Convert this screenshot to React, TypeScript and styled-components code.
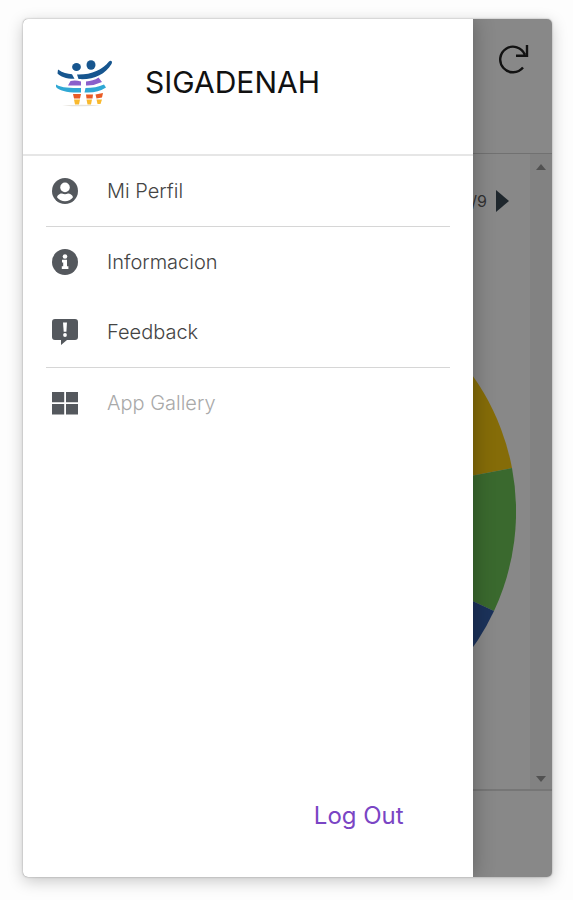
import React from "react";
import styled, { createGlobalStyle } from "styled-components";

const GlobalStyle = createGlobalStyle`
  * { box-sizing: border-box; }
  body {
    margin: 0;
    background: #fdfdfd;
    font-family: Inter, "Liberation Sans", sans-serif;
  }
  button { font: inherit; border: 0; padding: 0; background: none; cursor: pointer; }
`;

const Page = styled.div`
  min-height: 100vh;
  padding: 19px 21px 23px 23px;
  display: grid;
`;

const Phone = styled.div`
  display: grid;
  grid-template: minmax(0, 1fr) / minmax(0, 1fr);
  border-radius: 5px;
  overflow: hidden;
  background: #ffffff;
  box-shadow: 0 0 2px rgba(0, 0, 0, 0.35), 0 4px 16px rgba(0, 0, 0, 0.22);

  & > * { grid-area: 1 / 1; }
`;

const Screen = styled.div`
  display: flex;
  flex-direction: column;
`;

const TopBar = styled.header`
  height: 135px;
  padding: 25px 23px;
  display: flex;
  justify-content: flex-end;
  align-items: flex-start;
  border-bottom: 1px solid #d4d4d4;

  button { height: 30px; }
`;

const Body = styled.main`
  flex: 1;
  display: flex;
`;

const Report = styled.section`
  flex: 1;
  min-width: 0;
  padding-right: 14px;
`;

const Pager = styled.div`
  height: 94px;
  padding-right: 7px;
  display: flex;
  align-items: center;
  justify-content: flex-end;
  gap: 8px;
  font-size: 16px;
  color: #5f5f5f;

  button { display: flex; }
`;

const Chart = styled.svg`
  display: block;
  width: 100%;
  max-width: 470px;
  margin: 29px 0 0 auto;
`;

const ScrollTrack = styled.div`
  width: 22px;
  padding: 10px 6px 7px;
  display: flex;
  flex-direction: column;
  justify-content: space-between;
  align-items: center;
  background: #f4f4f4;
`;

const BottomBar = styled.footer`
  height: 88px;
  border-top: 2px solid #dddddd;
`;

const Scrim = styled.div`
  background: rgba(0, 0, 0, 0.467);
  z-index: 1;
`;

const Drawer = styled.aside`
  z-index: 2;
  width: 85%;
  display: flex;
  flex-direction: column;
  background: #ffffff;
  box-shadow: 0 0 20px rgba(0, 0, 0, 0.3);
`;

const Brand = styled.div`
  height: 137px;
  padding: 0 32px 10px;
  display: flex;
  align-items: center;
  gap: 32px;
  border-bottom: 2px solid #e6e6e6;
`;

const Title = styled.h1`
  margin: 0;
  font-size: 30px;
  line-height: 36px;
  font-weight: 400;
  color: #111111;
`;

const Menu = styled.nav`
  flex: 1;
  padding: 0 23px;
`;

const MenuGroup = styled.div`
  & + & { border-top: 1px solid #d6d6d6; }
`;

const MenuItem = styled.button<{ $muted?: boolean }>`
  width: 100%;
  height: 70px;
  padding: 0 6px;
  display: flex;
  align-items: center;
  gap: 29px;
  text-align: left;
  font-size: 20px;
  font-weight: 300;
  color: ${(p) => (p.$muted ? "#a9a9a9" : "#444444")};
`;

const DrawerFooter = styled.div`
  padding: 0 69px 46px;
  display: flex;
  justify-content: flex-end;
`;

const LogOut = styled.button`
  font-size: 24px;
  line-height: 30px;
  font-weight: 400;
  color: #7a45c4;
`;

const INK = "#54585d";

const Logo = () => (
  <svg width="58" height="50" viewBox="0 0 58 50" aria-hidden="true">
    <ellipse cx="21.5" cy="10" rx="4.4" ry="4" fill="#17568f" />
    <ellipse cx="36" cy="8" rx="4.5" ry="4.8" fill="#17568f" />
    <path d="M3 12.5C8 16 12 17 17 17.2L19.5 21.8C12 22 5 19.5 2.5 16.5ZM22 17.5C36 18 47 13 54 4.5C56 2.6 58 4.6 56.5 7C50 18 38 23 23.5 22Z" fill="#17568f" />
    <path d="M15.5 24Q20 22.6 26 24.4V28.4H13ZM31 24.4Q38 24.2 43.5 20.5L47 25Q39 28.8 31 28.4Z" fill="#8a60cb" />
    <path d="M1 27.5C7 31 15 31 26 31V35.4C14 36 4 34 1 30ZM30.5 31Q41 31 49 27.5L51 30.5Q42 36.4 29.5 35.4Z" fill="#30a8d4" />
    <path d="M18 37H26L25 41.4H19ZM31 37.4H38L37.5 41.6H31.5ZM40.5 37.4L48 36L47 40.6L41.5 41.4Z" fill="#e95b24" />
    <path d="M19 42.6H25L24 47.4H20ZM31.5 42.6H37L36 47.4H32.5ZM41.5 42.4H47L45.5 47H42.5Z" fill="#f9b92e" />
    <path d="M7 48.4Q30 47 46 48.6Q26 50 7 48.4Z" fill="#e6e3dc" />
  </svg>
);

const PersonIcon = () => (
  <svg width="26" height="26" viewBox="0 0 26 26" aria-hidden="true">
    <circle cx="13" cy="13" r="13" fill={INK} />
    <circle cx="13" cy="9.4" r="4.8" fill="#fff" />
    <path d="M5 19.2C6 16.2 8.8 15.6 10 15.6C12 16.5 14 16.5 16 15.6C17.2 15.6 20 16.2 21 19.2C19 22 16 23.2 13 23.2S7 22 5 19.2Z" fill="#fff" />
  </svg>
);

const InfoIcon = () => (
  <svg width="26" height="26" viewBox="0 0 26 26" aria-hidden="true">
    <circle cx="13" cy="13" r="13" fill={INK} />
    <circle cx="13" cy="7.5" r="2.3" fill="#fff" />
    <path d="M10 10.8H15V17.2H16.4V20H9.8V17.2H11.2V13.4H10Z" fill="#fff" />
  </svg>
);

const FeedbackIcon = () => (
  <svg width="26" height="26" viewBox="0 0 26 26" aria-hidden="true">
    <path d="M3 0H23Q26 0 26 3V18Q26 21 23 21H15L9 26V21H3Q0 21 0 18V3Q0 0 3 0Z" fill={INK} />
    <path d="M11 3.6H15L14.4 12.8H11.7Z" fill="#fff" />
    <circle cx="13" cy="16" r="1.9" fill="#fff" />
  </svg>
);

const GalleryIcon = () => (
  <svg width="26" height="26" viewBox="0 0 26 26" aria-hidden="true">
    <path d="M0 2H12.2V12.2H0ZM14 2H26V12.2H14ZM0 14H12.2V24.5H0ZM14 14H26V24.5H14Z" fill={INK} />
  </svg>
);

const RefreshIcon = () => (
  <svg width="30" height="30" viewBox="0 0 30 30" fill="none" stroke="#222" strokeWidth="2.4" aria-hidden="true">
    <path d="M24 23.5A12.8 12.8 0 1 1 25.8 10.5M28 1V11.8H17" />
  </svg>
);

export default function App() {
  return (
    <>
      <GlobalStyle />
      <Page>
        <Phone>
          <Screen>
            <TopBar>
              <button aria-label="Refresh"><RefreshIcon /></button>
            </TopBar>
            <Body>
              <Report>
                <Pager>
                  <span>1/9</span>
                  <button aria-label="Next page">
                    <svg width="14" height="22" viewBox="0 0 14 22" aria-hidden="true">
                      <path d="M1 0L14 11L1 22Z" fill="#3b4a55" />
                    </svg>
                  </button>
                </Pager>
                <Chart viewBox="0 0 470 470" role="img" aria-label="Pie chart">
                  <path d="M235 235L235 0A235 235 0 0 1 466 191Z" fill="#facb0f" />
                  <path d="M235 235L466 191A235 235 0 0 1 448 334Z" fill="#6dc556" />
                  <path d="M235 235L448 334A235 235 0 0 1 235 470Z" fill="#345ea9" />
                </Chart>
              </Report>
              <ScrollTrack>
                <svg width="10" height="6" viewBox="0 0 10 6" aria-hidden="true"><path d="M0 6L5 0L10 6Z" fill="#999" /></svg>
                <svg width="10" height="6" viewBox="0 0 10 6" aria-hidden="true"><path d="M0 0L5 6L10 0Z" fill="#999" /></svg>
              </ScrollTrack>
            </Body>
            <BottomBar />
          </Screen>
          <Scrim />
          <Drawer>
            <Brand>
              <Logo />
              <Title>SIGADENAH</Title>
            </Brand>
            <Menu>
              <MenuGroup>
                <MenuItem><PersonIcon />Mi Perfil</MenuItem>
              </MenuGroup>
              <MenuGroup>
                <MenuItem><InfoIcon />Informacion</MenuItem>
                <MenuItem><FeedbackIcon />Feedback</MenuItem>
              </MenuGroup>
              <MenuGroup>
                <MenuItem $muted><GalleryIcon />App Gallery</MenuItem>
              </MenuGroup>
            </Menu>
            <DrawerFooter>
              <LogOut>Log Out</LogOut>
            </DrawerFooter>
          </Drawer>
        </Phone>
      </Page>
    </>
  );
}
